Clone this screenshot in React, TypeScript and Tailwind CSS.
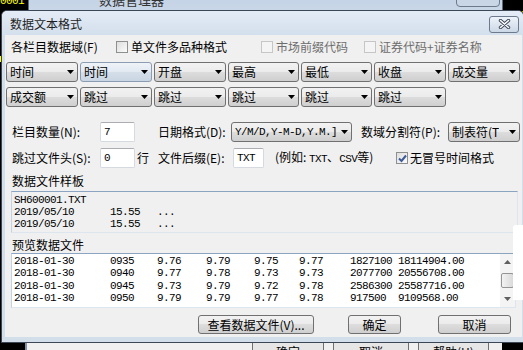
import React from "react"

const mono = "font-['Liberation_Mono',monospace] text-[11px] tracking-[-0.6px]"
const btnBg =
  "border border-[#707070] rounded-[3px] bg-[linear-gradient(#f2f2f2_0%,#ebebeb_50%,#dddddd_50%,#cfcfcf_100%)]"

function Arrow() {
  return (
    <svg width="7" height="4" viewBox="0 0 7 4" className="shrink-0">
      <path d="M0 0H7L3.5 4Z" fill="#000" />
    </svg>
  )
}

function Combo({ label, w, hot, isMono }: { label: string; w: string; hot?: boolean; isMono?: boolean }) {
  return (
    <div
      className={`${w} h-[20px] shrink-0 flex items-center justify-between pl-[3px] pr-[3px] rounded-[3px] border ${
        hot
          ? "border-[#8c9cb2] bg-[linear-gradient(#eef3f8_0%,#e2e9f1_50%,#d5dfea_50%,#c9d5e2_100%)]"
          : "border-[#707070] bg-[linear-gradient(#f2f2f2_0%,#ebebeb_50%,#dddddd_50%,#cfcfcf_100%)]"
      }`}
    >
      <span className={`overflow-hidden whitespace-nowrap leading-[16px] ${isMono ? mono : ""}`}>{label}</span>
      <Arrow />
    </div>
  )
}

function Check({ checked, disabled }: { checked?: boolean; disabled?: boolean }) {
  return (
    <div
      className={`w-[12px] h-[12px] shrink-0 border flex items-center justify-center ${
        disabled ? "border-[#c6c6c6] bg-[#f4f4f4]" : "border-[#8e8f8f] bg-linear-to-br from-[#dedede] to-[#fbfbfb]"
      }`}
    >
      {checked && (
        <svg width="9" height="9" viewBox="0 0 9 9">
          <path d="M1 4.5L3.5 7L8 1.5" fill="none" stroke="#3d5a99" strokeWidth="2" />
        </svg>
      )}
    </div>
  )
}

function TextBox({ w, value }: { w: string; value: string }) {
  return (
    <div
      className={`${w} h-[20px] shrink-0 bg-white border border-[#d5d9e0] border-t-[#abadb3] rounded-[2px] flex items-center pl-[3px] ${mono}`}
    >
      {value}
    </div>
  )
}

function Button({ label, w }: { label: string; w: string }) {
  return (
    <div className={`${w} h-[19px] shrink-0 flex items-center justify-center leading-[14px] ${btnBg}`}>{label}</div>
  )
}

const rows = [
  ["2018-01-30", "0935", "9.76", "9.79", "9.75", "9.77", "1827100", "18114904.00"],
  ["2018-01-30", "0940", "9.77", "9.78", "9.73", "9.73", "2077700", "20556708.00"],
  ["2018-01-30", "0945", "9.73", "9.79", "9.72", "9.78", "2586300", "25587716.00"],
  ["2018-01-30", "0950", "9.79", "9.79", "9.77", "9.78", "917500", "9109568.00"],
]

export default function App() {
  return (
    <div className="relative w-[523px] h-[350px] overflow-hidden bg-black font-['Noto_Sans_CJK_SC',sans-serif] text-[12px] text-black">
      {/* desktop bits behind */}
      <div className={`absolute left-0 top-[-7px] text-[#ffff00] ${mono}`}>0001</div>
      <div className={`absolute left-[505px] top-[7px] text-[#ffff00] ${mono}`}>00%</div>
      <div className="absolute left-0 top-[56px] w-[2px] h-[6px] bg-[#ffff00]" />

      {/* manager window behind, top */}
      <div className="absolute left-[28px] top-[-20px] w-[475px] h-[32px] bg-linear-to-b from-[#bccde2] to-[#c9d7e8] border border-[#5d6b7d]">
        <div className="absolute left-[70px] top-[12px] text-[13px] leading-[14px] text-[#333]">数据管理器</div>
        <div className="absolute left-[427px] top-[8px] w-[44px] h-[18px] rounded-b-[4px] border border-[#6d7a8c] bg-[#c9d6e6]" />
      </div>

      {/* manager window behind, bottom */}
      <div className="absolute left-[25px] top-[336px] w-[477px] h-[20px] bg-[#f0f0f0] border-l-[2px] border-[#8292a8]">
        <div className="absolute left-[225px] top-[1px] w-[72px] h-[24px] flex items-start justify-center pt-[7px] leading-[14px] border border-[#707070] rounded-[3px] bg-[#e6e6e6]">确定</div>
        <div className="absolute left-[306px] top-[1px] w-[76px] h-[24px] flex items-start justify-center pt-[7px] leading-[14px] border border-[#707070] rounded-[3px] bg-[#e6e6e6]">取消</div>
        <div className="absolute left-[391px] top-[1px] w-[71px] h-[24px] flex items-start justify-center pt-[7px] leading-[14px] border border-[#707070] rounded-[3px] bg-[#e6e6e6]">帮助(H)</div>
      </div>

      {/* dialog */}
      <div className="absolute left-[1px] top-[10px] w-[523px] h-[333px] flex flex-col border border-[#3c4655] rounded-t-[6px] bg-[#d3deeb]">
        <div className="h-[24px] shrink-0 flex items-center justify-between pl-[8px] pr-[4px] rounded-t-[5px] bg-linear-to-b from-[#e4ecf6] to-[#d3dfec]">
          <span className="text-[12px] leading-[14px] text-[#1e1e1e] mt-[1px]">数据文本格式</span>
          <div className="w-[30px] h-[17px] mt-[2px] rounded-[3px] border border-[#6d7a8e] bg-linear-to-b from-[#eef3f9] to-[#ccd8e6] flex items-center justify-center">
            <svg width="13" height="10" viewBox="0 0 13 10">
              <path d="M2.5 1.5L10.5 8.5M10.5 1.5L2.5 8.5" stroke="#3b4658" strokeWidth="3.4" strokeLinecap="round" />
              <path d="M2.5 1.5L10.5 8.5M10.5 1.5L2.5 8.5" stroke="#ffffff" strokeWidth="1.6" strokeLinecap="round" />
            </svg>
          </div>
        </div>

        <div className="flex-1 ml-[3px] mr-[1px] mb-[5px] bg-[#f0f0f0] flex flex-col leading-[14px]">
          {/* field options */}
          <div className="mt-[5px] h-[14px] pl-[6px] flex items-center">
            <div className="w-[105px] shrink-0">各栏目数据域(F)</div>
            <div className="w-[145px] shrink-0 flex items-center gap-[3px]">
              <Check />
              <span>单文件多品种格式</span>
            </div>
            <div className="w-[103px] shrink-0 flex items-center gap-[3px] text-[#6d6d6d]">
              <Check disabled />
              <span>市场前缀代码</span>
            </div>
            <div className="flex items-center gap-[3px] text-[#6d6d6d]">
              <Check disabled />
              <span>证券代码+证券名称</span>
            </div>
          </div>

          <div className="mt-[8px] pl-[1px] flex gap-[2px]">
            <Combo w="w-[72px]" label="时间" />
            <Combo w="w-[72px]" label="时间" hot />
            <Combo w="w-[72px]" label="开盘" />
            <Combo w="w-[71px]" label="最高" />
            <Combo w="w-[71px]" label="最低" />
            <Combo w="w-[72px]" label="收盘" />
            <Combo w="w-[72px]" label="成交量" />
          </div>
          <div className="mt-[5px] pl-[1px] flex gap-[2px]">
            <Combo w="w-[72px]" label="成交额" />
            <Combo w="w-[72px]" label="跳过" />
            <Combo w="w-[72px]" label="跳过" />
            <Combo w="w-[71px]" label="跳过" />
            <Combo w="w-[71px]" label="跳过" />
            <Combo w="w-[72px]" label="跳过" />
          </div>

          {/* count / date format */}
          <div className="mt-[15px] pl-[7px] flex items-center">
            <div className="w-[88px] shrink-0">栏目数量(N):</div>
            <TextBox w="w-[35px]" value="7" />
            <div className="w-[23px] shrink-0" />
            <div className="w-[73px] shrink-0">日期格式(D):</div>
            <Combo w="w-[121px]" label="Y/M/D,Y-M-D,Y.M.]" isMono />
            <div className="w-[9px] shrink-0" />
            <div className="w-[87px] shrink-0">数域分割符(P):</div>
            <Combo w="w-[72px]" label="制表符(T" />
          </div>

          {/* header skip / suffix */}
          <div className="mt-[6px] pl-[7px] flex items-center">
            <div className="w-[88px] shrink-0">跳过文件头(S):</div>
            <TextBox w="w-[35px]" value="0" />
            <div className="w-[23px] shrink-0 pl-[2px]">行</div>
            <div className="w-[75px] shrink-0">文件后缀(E):</div>
            <TextBox w="w-[31px]" value="TXT" />
            <div className="w-[11px] shrink-0" />
            <div className="w-[121px] shrink-0 whitespace-nowrap">
              (例如: <span className={mono}>TXT</span>、<span className={mono}>CSV</span>等)
            </div>
            <Check checked />
            <span className="ml-[2px]">无冒号时间格式</span>
          </div>

          {/* sample */}
          <div className="mt-[6px] pl-[7px] h-[14px]">数据文件样板</div>
          <div className={`mt-[3px] ml-[6px] w-[507px] h-[42px] shrink-0 pt-[2px] pl-[2px] border border-[#dde5ee] border-t-[#8aa4c2] border-l-[#c4d2e1] leading-[12px] ${mono}`}>
            <div>SH600001.TXT</div>
            <div className="grid grid-cols-[96px_47px_auto]">
              <span>2019/05/10</span>
              <span>15.55</span>
              <span>...</span>
            </div>
            <div className="grid grid-cols-[96px_47px_auto]">
              <span>2019/05/10</span>
              <span>15.55</span>
              <span>...</span>
            </div>
          </div>

          {/* preview */}
          <div className="mt-[5px] pl-[7px] h-[14px]">预览数据文件</div>
          <div className="mt-[1px] ml-[6px] w-[505px] h-[55px] shrink-0 flex bg-white border border-[#dde5ee] border-t-[#8aa4c2] border-l-[#c4d2e1]">
            <div className={`flex-1 pt-[1px] pl-[2px] leading-[12.3px] ${mono}`}>
              {rows.map((r, i) => (
                <div key={i} className="grid grid-cols-[96px_47px_49px_48px_45px_51px_48px_auto] whitespace-nowrap">
                  {r.map((c, j) => (
                    <span key={j}>{c}</span>
                  ))}
                </div>
              ))}
            </div>
            <div className="w-[15px] shrink-0 flex flex-col items-center bg-[#f4f4f4]">
              <svg width="7" height="4" viewBox="0 0 7 4" className="mt-[6px]">
                <path d="M0 4H7L3.5 0Z" fill="#606060" />
              </svg>
              <div className="mt-[9px] w-[13px] h-[15px] rounded-[2px] border border-[#959595] bg-linear-to-r from-[#f3f3f3] to-[#dadada]" />
              <div className="flex-1" />
              <svg width="7" height="4" viewBox="0 0 7 4" className="mb-[6px]">
                <path d="M0 0H7L3.5 4Z" fill="#606060" />
              </svg>
            </div>
          </div>

          {/* buttons */}
          <div className="mt-[7px] pl-[193px] flex">
            <Button w="w-[116px]" label="查看数据文件(V)..." />
            <div className="w-[34px] shrink-0" />
            <Button w="w-[53px]" label="确定" />
            <div className="w-[37px] shrink-0" />
            <Button w="w-[73px]" label="取消" />
          </div>
        </div>
      </div>

      {/* window peeking at right */}
      <div className="absolute left-[513px] top-[225px] w-[12px] h-[75px] bg-white rounded-tl-[3px]" />
    </div>
  )
}
